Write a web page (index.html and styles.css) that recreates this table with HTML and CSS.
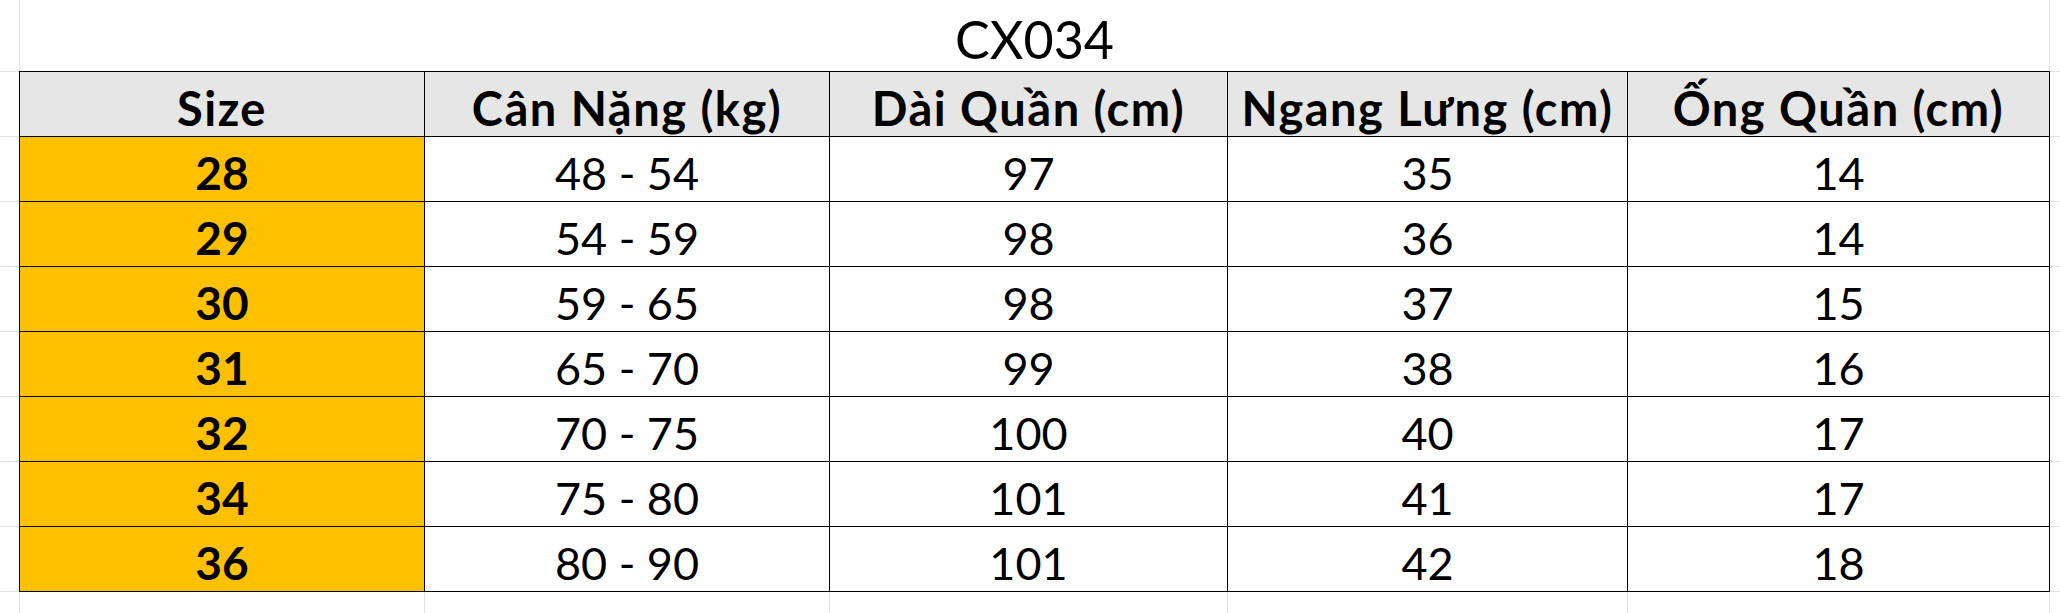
FILE: index.html
```html
<!DOCTYPE html>
<html lang="vi">
<head>
<meta charset="utf-8">
<title>CX034</title>
<link rel="stylesheet" href="styles.css">
</head>
<body>
<div class="sheet">
  <div class="title-row"><span class="title">CX034</span></div>
  <div class="grid-area">
    <div class="size-table">
      <div class="cell head">Size</div>
      <div class="cell head">Cân Nặng (kg)</div>
      <div class="cell head">Dài Quần (cm)</div>
      <div class="cell head">Ngang Lưng (cm)</div>
      <div class="cell head">Ống Quần (cm)</div>

      <div class="cell size">28</div><div class="cell">48 - 54</div><div class="cell">97</div><div class="cell">35</div><div class="cell">14</div>
      <div class="cell size">29</div><div class="cell">54 - 59</div><div class="cell">98</div><div class="cell">36</div><div class="cell">14</div>
      <div class="cell size">30</div><div class="cell">59 - 65</div><div class="cell">98</div><div class="cell">37</div><div class="cell">15</div>
      <div class="cell size">31</div><div class="cell">65 - 70</div><div class="cell">99</div><div class="cell">38</div><div class="cell">16</div>
      <div class="cell size">32</div><div class="cell">70 - 75</div><div class="cell">100</div><div class="cell">40</div><div class="cell">17</div>
      <div class="cell size">34</div><div class="cell">75 - 80</div><div class="cell">101</div><div class="cell">41</div><div class="cell">17</div>
      <div class="cell size">36</div><div class="cell">80 - 90</div><div class="cell">101</div><div class="cell">42</div><div class="cell">18</div>
    </div>
  </div>
</div>
</body>
</html>
```
FILE: styles.css
```css
html, body {
  margin: 0;
  padding: 0;
  background: #ffffff;
}

body {
  font-family: Lato, "Open Sans", "Liberation Sans", sans-serif;
  color: #000;
}

.sheet {
  width: 2060px;
  height: 613px;
  overflow: hidden;
}

.title-row {
  margin-left: 19px;
  width: 2031px;
  height: 71px;
  box-sizing: border-box;
  border-left: 1px solid #e2e2e2;
  border-right: 1px solid #e2e2e2;
  display: flex;
  justify-content: center;
  align-items: flex-start;
}

.title {
  font-size: 52px;
  font-weight: 400;
  line-height: 1;
  padding-top: 13px;
}

.grid-area {
  height: 542px;
  background-image:
    repeating-linear-gradient(to bottom, #e2e2e2 0 1px, transparent 1px 65px),
    linear-gradient(#e2e2e2, #e2e2e2),
    linear-gradient(#e2e2e2, #e2e2e2),
    linear-gradient(#e2e2e2, #e2e2e2),
    linear-gradient(#e2e2e2, #e2e2e2),
    linear-gradient(#e2e2e2, #e2e2e2),
    linear-gradient(#e2e2e2, #e2e2e2);
  background-size: 100% 100%, 1px 100%, 1px 100%, 1px 100%, 1px 100%, 1px 100%, 1px 100%;
  background-position: 0 0, 19px 0, 424px 0, 829px 0, 1227px 0, 1627px 0, 2049px 0;
  background-repeat: no-repeat;
  padding-left: 19px;
}

.size-table {
  display: grid;
  grid-template-columns: 405px 405px 398px 400px 422px;
  grid-auto-rows: 65px;
  width: max-content;
  border-left: 1px solid #000;
  border-top: 1px solid #000;
  background: #fff;
}

.cell {
  border-right: 1px solid #000;
  border-bottom: 1px solid #000;
  display: flex;
  align-items: center;
  justify-content: center;
  padding-top: 8px;
  box-sizing: border-box;
  font-size: 45px;
  line-height: 1;
  white-space: nowrap;
}

.head {
  background: #e7e6e6;
  font-weight: 700;
  font-size: 47px;
  letter-spacing: 1.5px;
}

.size {
  background: #ffc000;
  font-weight: 700;
  font-size: 46px;
}
```
